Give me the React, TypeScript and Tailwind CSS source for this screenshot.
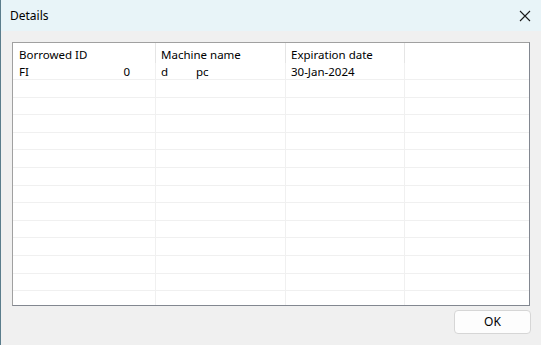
const columns = [
  { label: 'Borrowed ID', width: 'w-[143px]', pad: 'pl-[6px]' },
  { label: 'Machine name', width: 'w-[130px]', pad: 'pl-[5px]' },
  { label: 'Expiration date', width: 'w-[119px]', pad: 'pl-[5px]' },
];

const emptyRows = Array.from({ length: 13 });

export default function App() {
  return (
    <div className="w-[541px] h-[345px] overflow-hidden bg-[#5b7d8c] pl-px font-['Noto_Sans',sans-serif] text-[11.5px] text-black">
      <div className="flex h-full flex-col bg-[#f0f0f0]">
        {/* Title bar */}
        <div className="flex h-[31px] shrink-0 items-center justify-between bg-[#e8f4f8] pl-[9px] pr-[10px] text-[12px]">
          <span className="leading-none">Details</span>
          <svg width="12" height="12" viewBox="0 0 12 12" className="text-[#1a1a1a]">
            <path d="M1 1L11 11M11 1L1 11" stroke="currentColor" strokeWidth="1.1" />
          </svg>
        </div>

        {/* List view */}
        <div className="mx-[11px] mt-[11px] h-[264px] overflow-hidden border border-t-[#a0a0a0] border-l-[#a0a0a0] border-r-[#828790] border-b-[#828790] bg-white">
          <div className="flex h-[20px]">
            {columns.map((c) => (
              <div
                key={c.label}
                className={`${c.width} ${c.pad} flex h-full shrink-0 items-center border-r border-[#e5e5e5] pt-[4px]`}
              >
                {c.label}
              </div>
            ))}
          </div>
          <div className="flex h-[17px] items-center border-b border-[#f0f0f0]">
            <div className="flex h-full w-[143px] shrink-0 items-center justify-between border-r border-[#f0f0f0] pl-[6px] pr-[25px] pt-[2px]">
              <span>FI</span>
              <span>0</span>
            </div>
            <div className="flex h-full w-[130px] shrink-0 items-center border-r border-[#f0f0f0] pl-[5px] pt-[2px]">
              <span className="w-[35px]">d</span>
              <span>pc</span>
            </div>
            <div className="flex h-full w-[119px] shrink-0 items-center border-r border-[#f0f0f0] pl-[5px] pt-[2px]">
              30-Jan-2024
            </div>
          </div>
          {emptyRows.map((_, i) => (
            <div key={i} className="flex h-[17.6px] border-b border-[#f0f0f0]">
              <div className="w-[143px] shrink-0 border-r border-[#f0f0f0]" />
              <div className="w-[130px] shrink-0 border-r border-[#f0f0f0]" />
              <div className="w-[119px] shrink-0 border-r border-[#f0f0f0]" />
            </div>
          ))}
        </div>

        {/* Footer */}
        <div className="flex justify-end pr-[10px] pt-[4px]">
          <button className="h-[24px] w-[77px] rounded-[4px] border border-[#d6d6d6] bg-[#fdfdfd] text-[12px] leading-none">
            OK
          </button>
        </div>
      </div>
    </div>
  );
}
